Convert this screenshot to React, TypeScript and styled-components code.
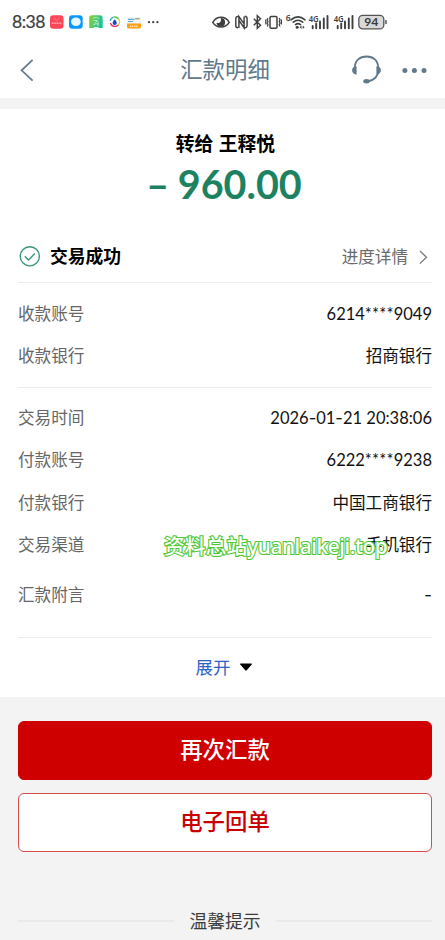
import React from "react";
import styled, { createGlobalStyle } from "styled-components";

const GlobalStyle = createGlobalStyle`
  * { box-sizing: border-box; }
  body {
    margin: 0;
    background: #f3f3f3;
    font-family: "Noto Sans", "Noto Sans CJK SC", sans-serif;
    color: #111;
  }
`;

const Screen = styled.div`
  width: 445px;
  height: 940px;
  overflow: hidden;
  background: #f3f3f3;
`;

const StatusBar = styled.div`
  height: 44px;
  background: #fff;
  display: flex;
  align-items: center;
  padding: 0 58px 0 12px;
`;

const Clock = styled.span`
  width: 38px;
  font: 400 17.6px/20px Lato, sans-serif;
  letter-spacing: -0.5px;
  color: #3c3c3c;
  -webkit-text-stroke: 0.2px #3c3c3c;
`;

const StatusIcon = styled.svg<{ $w: number; $gap?: number }>`
  flex: none;
  width: ${(p) => p.$w}px;
  height: 20px;
  margin-left: ${(p) => p.$gap ?? 0}px;
  overflow: visible;
`;

const StatusGroup = styled.div<{ $end?: boolean }>`
  display: flex;
  align-items: center;
  margin-left: ${(p) => (p.$end ? "auto" : "0")};
`;

const NavBar = styled.header`
  height: 54px;
  background: #fff;
  display: grid;
  grid-template-columns: 90px 1fr 90px;
  align-items: center;
  padding: 0 17px 2px 19px;
`;

const NavTitle = styled.h1`
  margin: 0;
  padding-left: 3px;
  text-align: center;
  font-size: 22.4px;
  line-height: 32px;
  font-weight: 400;
  color: #60798b;
`;

const NavActions = styled.div`
  display: flex;
  align-items: center;
  justify-content: flex-end;
  gap: 20px;
`;

const Drawing = styled.svg`
  display: block;
  flex: none;
  overflow: visible;
`;

const Card = styled.main`
  margin-top: 11px;
  height: 588px;
  background: #fff;
  padding: 0 13px 0 18px;
`;

const Summary = styled.section`
  height: 121px;
  padding: 21px 0 0 1px;
  text-align: center;
`;

const Payee = styled.div`
  font-size: 18.8px;
  line-height: 28px;
  font-weight: 700;
  word-spacing: 0.5px;
  color: #000;
`;

const Amount = styled.div`
  padding-right: 3px;
  font-family: Lato, sans-serif;
  font-size: 39.5px;
  line-height: 52px;
  font-weight: 700;
  word-spacing: -1px;
  color: #1c8261;
`;

const ResultRow = styled.section`
  height: 53px;
  display: flex;
  align-items: center;
  border-bottom: 1px solid #ececec;
`;

const ResultText = styled.strong`
  margin-left: 9px;
  font-size: 17.8px;
  line-height: 26px;
  font-weight: 700;
  color: #000;
`;

const ProgressLink = styled.a`
  margin: 1px 4px 0 auto;
  display: flex;
  align-items: center;
  gap: 11px;
  font-size: 16.6px;
  line-height: 24px;
  color: #6a6a6a;
`;

const Group = styled.dl<{ $top: number; $height: number }>`
  margin: 0;
  height: ${(p) => p.$height}px;
  padding-top: ${(p) => p.$top}px;
  border-bottom: 1px solid #ececec;
`;

const Row = styled.div<{ $h?: number }>`
  height: ${(p) => p.$h ?? 42.3}px;
  display: flex;
  align-items: center;
  justify-content: space-between;
  font-size: 16.6px;
  line-height: 24px;
`;

const Label = styled.dt`
  color: #666;
`;

const Value = styled.dd`
  margin: 0;
  color: #111;
`;

const Digits = styled(Value)`
  font-family: Lato, sans-serif;
  font-size: 16.5px;
`;

const Mask = styled.span`
  letter-spacing: 0.2px;
`;

const Dash = styled.span`
  font-family: Inter, sans-serif;
`;

const Anchor = styled.div`
  position: relative;
`;

const Watermark = styled.span`
  position: absolute;
  left: 146px;
  top: -107px;
  white-space: nowrap;
  font-size: 20.8px;
  line-height: 30px;
  font-weight: 500;
  color: #fff;
  -webkit-text-stroke: 2.2px #50c838;
  paint-order: stroke fill;
`;

const WatermarkDomain = styled.span`
  letter-spacing: -0.4px;
`;

const Expand = styled.div`
  height: 57px;
  padding-right: 2px;
  display: flex;
  align-items: center;
  justify-content: center;
  gap: 10px;
  font-size: 17.4px;
  line-height: 24px;
  color: #2e62c8;
`;

const Actions = styled.div`
  padding: 24px 13px 0 18px;
  display: flex;
  flex-direction: column;
  gap: 13px;
`;

const Button = styled.button<{ $primary?: boolean }>`
  height: 59px;
  padding: 0 0 1px;
  border-radius: 6px;
  border: 1px solid ${(p) => (p.$primary ? "#cf0000" : "#d94a4a")};
  background: ${(p) => (p.$primary ? "#cf0000" : "#fff")};
  color: ${(p) => (p.$primary ? "#fff" : "#c80000")};
  font-family: inherit;
  font-size: 22.4px;
  line-height: 32px;
  font-weight: 500;
`;

const Tips = styled.div`
  margin-top: 56px;
  padding: 0 13px 0 18px;
  display: flex;
  align-items: center;
  gap: 15px;
  font-size: 17.8px;
  line-height: 26px;
  color: #3b3b3b;

  &::before,
  &::after {
    content: "";
    flex: 1;
    height: 2px;
    background: #e9e9e9;
  }
`;

const Signal = ({ gap }: { gap: number }) => (
  <StatusIcon $w={20} $gap={gap} viewBox="0 0 20 20">
    <text x="-0.3" y="9.8" fontSize="9" fontWeight="600" fontFamily="Noto Sans" fill="#3f3f3f" textLength="10" lengthAdjust="spacingAndGlyphs">4G</text>
    <path d="M3.7 14v2.2M7.2 11.5v4.7M11 9.5v6.7M14.8 6.5v9.7M18.5 4v12.2" stroke="#3f3f3f" strokeWidth="1.9" strokeLinecap="round" />
  </StatusIcon>
);

export default function App() {
  return (
    <Screen>
      <GlobalStyle />
      <StatusBar>
        <Clock>8:38</Clock>
        <StatusGroup>
          <StatusIcon $w={14} viewBox="0 0 14 20">
            <rect y="3.2" width="13.5" height="13.6" rx="3" fill="#fb4757" />
            <path d="M4.3 6.2l2.5 2.3 2.5-2.3" fill="none" stroke="#ff9ca4" strokeWidth=".8" />
            <path d="M1.7 11.2h10" stroke="#ffb0b5" strokeWidth="1.5" strokeDasharray="1.2 .5" />
          </StatusIcon>
          <StatusIcon $w={14} $gap={5} viewBox="0 0 14 20">
            <rect y="3.2" width="13.7" height="13.6" rx="3.2" fill="#0a98ff" />
            <path d="M6.9 5.6c3 0 4.8 1.7 4.8 4.1s-1.8 4.3-4.6 4.3c-3 0-5-1.7-5-4.2s1.9-4.2 4.8-4.2z" fill="#eaf8ff" />
          </StatusIcon>
          <StatusIcon $w={14} $gap={5.5} viewBox="0 0 14 20">
            <defs>
              <linearGradient id="leaf" x1="0" x2="1" y2=".4">
                <stop stopColor="#8fce3c" />
                <stop offset="1" stopColor="#1fc39a" />
              </linearGradient>
            </defs>
            <path d="M3 3.2h8a2.7 2.7 0 012.7 2.7V16H.2V5.9A2.7 2.7 0 013 3.2z" fill="url(#leaf)" />
            <path d="M4 6.2q3.5-2 6 .5M4.500 8.500h4l-3 3M9 9v5M4 13q3-2 6-1" fill="none" stroke="#c5f3cf" strokeWidth=".8" />
            <path d="M5 15.800h4.500" stroke="#e9fff5" strokeWidth="1.600" />
          </StatusIcon>
          <StatusIcon $w={12} $gap={6.5} viewBox="0 0 12 20">
            <g fill="none" strokeWidth="1.3">
              <path d="M1.2 9a4.8 4.8 0 013.3-3.8" stroke="#2bb5c9" />
              <path d="M4.500 5.200a4.800 4.800 0 015 1.800" stroke="#63c44c" />
              <path d="M9.500 7a4.800 4.800 0 01-.2 6" stroke="#e7c93a" />
              <path d="M9.300 13a4.800 4.800 0 01-8-2" stroke="#ea2863" />
            </g>
            <path d="M5.600 7.200c.9 1.200 2.200 2.200 2.200 3.700a2.100 2.100 0 01-4.200 0c0-1.500 1.200-2.300 2-3.700z" fill="#1b48cf" />
          </StatusIcon>
          <StatusIcon $w={14} $gap={5.5} viewBox="0 0 14 20">
            <rect y="5" width="14" height="8" fill="#f1f3f4" />
            <path d="M1 7.300h6.500M8.500 6.500h4M1 9.500h5" stroke="#56a8d8" strokeWidth="1.200" />
            <path d="M8 7h4.500" stroke="#efa53c" strokeWidth="1" />
            <path d="M0 11.500h14v2.900a2.200 2.200 0 01-2.200 2.200H2.200A2.200 2.200 0 010 14.400z" fill="#ff9f16" />
            <path d="M3 14.200h8" stroke="#fff" strokeWidth="1" strokeDasharray="1.500 .4" />
          </StatusIcon>
          <StatusIcon $w={12} $gap={6.5} viewBox="0 0 12 20">
            <g fill="#444">
              <circle cx="2" cy="10.200" r="1.150" />
              <circle cx="6.200" cy="10.200" r="1.150" />
              <circle cx="10.400" cy="10.200" r="1.150" />
            </g>
          </StatusIcon>
        </StatusGroup>
        <StatusGroup $end>
          <StatusIcon $w={18} viewBox="0 0 18 20">
            <path d="M.8 10.300C4.800 3.600 13.200 3.600 17.200 10.300 13.200 16.600 4.800 16.600.8 10.300z" fill="none" stroke="#3f3f3f" strokeWidth="1.500" />
            <path d="M8.800 6a4.300 4.300 0 11-4.300 4.700l2.600.2 1.900-1.900z" fill="#3f3f3f" />
          </StatusIcon>
          <StatusIcon $w={13} $gap={5} viewBox="0 0 13 20">
            <path d="M3.300 4.600Q.8 4.300.8 7v6.400Q.8 15.600 3 15.800M3.900 16V8.200l5.200 7.600V12M3.900 8V4.600l5.200 7.200V4.400M9.800 4.300q2.300.1 2.300 2.600v6.400q0 2.500-2.500 2.400" fill="none" stroke="#3f3f3f" strokeWidth="1.450" />
          </StatusIcon>
          <StatusIcon $w={9} $gap={5} viewBox="0 0 9 20">
            <path d="M.8 6.800l6.700 6.500L4.300 16.300V3.700l3.200 3L.8 13.200" fill="none" stroke="#3f3f3f" strokeWidth="1.450" />
          </StatusIcon>
          <StatusIcon $w={17} $gap={3.5} viewBox="0 0 17 20">
            <rect x="5" y="4.400" width="7" height="11.800" rx="1.200" fill="none" stroke="#3f3f3f" strokeWidth="1.500" />
            <path d="M3 6l-.8 1.700.8 1.700-.8 1.700.8 1.700-.8 1.700M.8 7.500v5M14.200 6l.8 1.700-.8 1.700.8 1.700-.8 1.700.8 1.700M16.400 7.500v5" fill="none" stroke="#3f3f3f" strokeWidth="1.200" />
          </StatusIcon>
          <StatusIcon $w={20} $gap={4} viewBox="0 0 20 20">
            <text x="-.3" y="9" fontSize="8.500" fontWeight="600" fontFamily="Noto Sans" fill="#3f3f3f">6</text>
            <g fill="none" stroke="#3f3f3f" strokeWidth="1.600" strokeLinecap="round">
              <path d="M5 7.800q7-5.800 14 0" />
              <path d="M7.300 10.200q4.700-3.900 9.400 0" />
              <path d="M9.500 12.600q2.500-2 5 0" />
            </g>
            <circle cx="11.200" cy="15.200" r="1.500" fill="#3f3f3f" />
            <path d="M13.600 15.300l1.900-1.700v3.400zM18.600 15.300l-1.900-1.700v3.400z" fill="#3f3f3f" />
          </StatusIcon>
          <Signal gap={3} />
          <Signal gap={4.5} />
          <StatusIcon $w={29} $gap={4.5} viewBox="0 0 29 20">
            <rect x=".8" y="3.300" width="25" height="13.600" rx="4" fill="#d9d9d9" stroke="#555" strokeWidth="1.300" />
            <path d="M28 8.600v3" stroke="#444" strokeWidth="1.400" strokeLinecap="round" />
            <text x="6.300" y="14.400" fontSize="12.200" fontWeight="700" fontFamily="Lato" fill="#3a3a3a" textLength="14">94</text>
          </StatusIcon>
        </StatusGroup>
      </StatusBar>

      <NavBar>
        <Drawing width="16" height="24" viewBox="0 0 16 24">
          <path d="M13.600 1.800L2.600 12.300l11 10.300" fill="none" stroke="#60798b" strokeWidth="1.700" />
        </Drawing>
        <NavTitle>汇款明细</NavTitle>
        <NavActions>
          <Drawing width="30" height="30" viewBox="0 0 30 30">
            <path d="M2.800 13C2.800 5.500 7.700 1.500 14.500 1.500S26.200 5.500 26.200 13v3c0 5-4 9.500-10.700 10.500" fill="none" stroke="#60798b" strokeWidth="1.800" />
            <path d="M4.600 11.200v8.300C1.900 19.500.1 18 .1 15.300s1.800-4.100 4.500-4.100zM24.400 11.200v8.300c2.700 0 4.500-1.500 4.500-4.200s-1.800-4.100-4.500-4.100z" fill="#60798b" />
            <ellipse cx="14.500" cy="26.200" rx="3.200" ry="2.200" fill="#60798b" />
          </Drawing>
          <Drawing width="26" height="6" viewBox="0 0 26 6">
            <g fill="#60798b">
              <circle cx="2.900" cy="3.400" r="2.500" />
              <circle cx="12.400" cy="3.400" r="2.500" />
              <circle cx="22" cy="3.400" r="2.500" />
            </g>
          </Drawing>
        </NavActions>
      </NavBar>

      <Card>
        <Summary>
          <Payee>转给 王释悦</Payee>
          <Amount>– 960.00</Amount>
        </Summary>
        <ResultRow>
          <Drawing width="23" height="22" viewBox="0 0 23 22">
            <circle cx="11.800" cy="11.300" r="9.600" fill="none" stroke="#38977a" strokeWidth="1.400" />
            <path d="M6.800 11.300l3.700 3.600 6.400-6.300" fill="none" stroke="#38977a" strokeWidth="1.400" />
          </Drawing>
          <ResultText>交易成功</ResultText>
          <ProgressLink>
            进度详情
            <Drawing width="9" height="14" viewBox="0 0 9 14">
              <path d="M1 1l6.500 6.300L1 13.600" fill="none" stroke="#777" strokeWidth="1.300" />
            </Drawing>
          </ProgressLink>
        </ResultRow>
        <Group $top={10} $height={105}>
          <Row><Label>收款账号</Label><Digits>6214<Mask>****</Mask>9049</Digits></Row>
          <Row><Label>收款银行</Label><Value>招商银行</Value></Row>
        </Group>
        <Group $top={9} $height={250}>
          <Row><Label>交易时间</Label><Digits>2026<Dash>-</Dash>01<Dash>-</Dash>21 20:38:06</Digits></Row>
          <Row><Label>付款账号</Label><Digits>6222<Mask>****</Mask>9238</Digits></Row>
          <Row><Label>付款银行</Label><Value>中国工商银行</Value></Row>
          <Row><Label>交易渠道</Label><Value>手机银行</Value></Row>
          <Row $h={57}><Label>汇款附言</Label><Value><Dash>-</Dash></Value></Row>
        </Group>
        <Anchor>
          <Watermark>资料总站<WatermarkDomain>yuanlaikeji.top</WatermarkDomain></Watermark>
        </Anchor>
        <Expand>
          展开
          <Drawing width="12" height="8" viewBox="0 0 12 8">
            <path d="M0 1.200q0-.7.700-.7h10.600q.7 0 .7.700L6.700 7.300q-.7.700-1.400 0z" fill="#000" />
          </Drawing>
        </Expand>
      </Card>

      <Actions>
        <Button $primary>再次汇款</Button>
        <Button>电子回单</Button>
      </Actions>
      <Tips>温馨提示</Tips>
    </Screen>
  );
}
